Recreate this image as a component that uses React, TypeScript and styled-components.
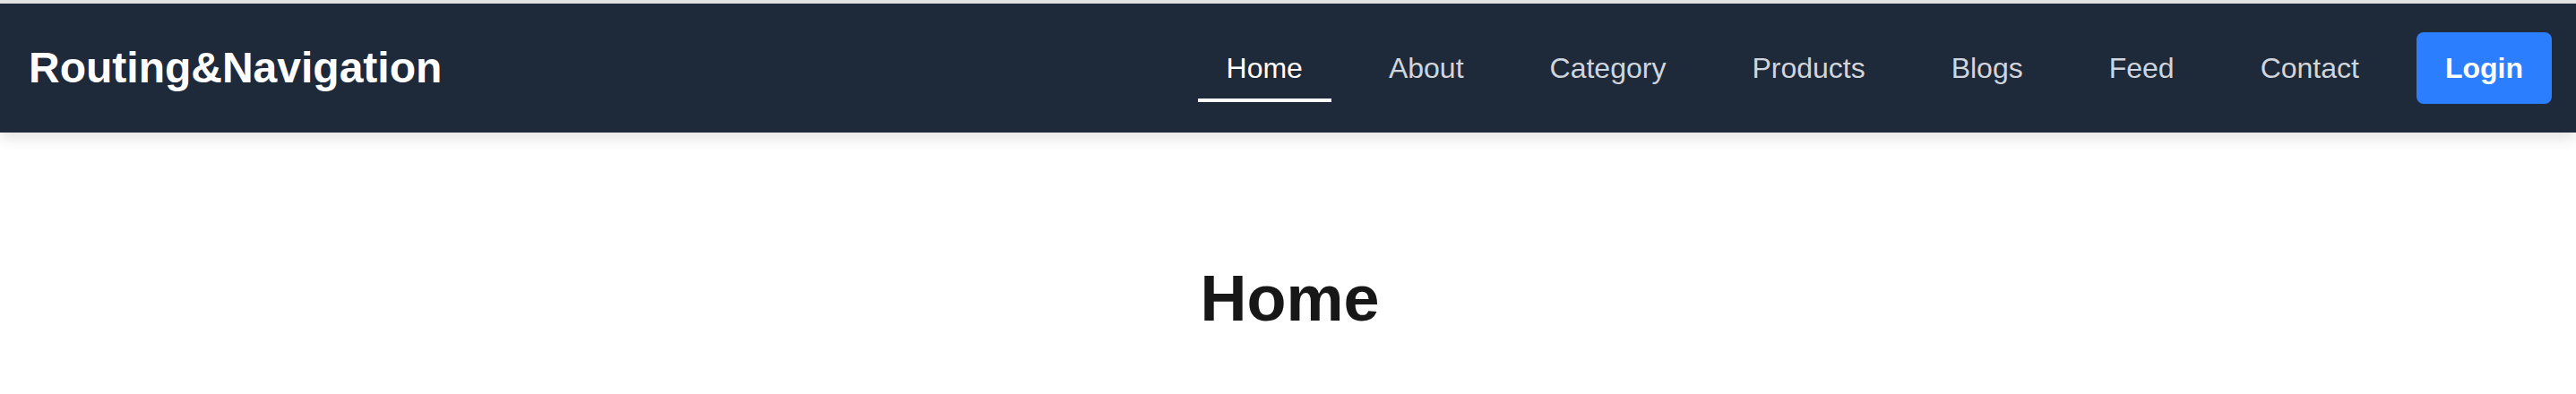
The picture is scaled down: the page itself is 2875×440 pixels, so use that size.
import styled, { createGlobalStyle } from "styled-components";

const GlobalStyle = createGlobalStyle`
  * {
    box-sizing: border-box;
  }
  body {
    margin: 0;
    background: #ffffff;
    font-family: "Liberation Sans", Arial, sans-serif;
  }
`;

const Page = styled.div`
  min-height: 440px;
  border-top: 4px solid #e6e6e6;
`;

const Header = styled.header`
  display: flex;
  align-items: center;
  justify-content: space-between;
  height: 144px;
  padding: 0 27px 0 32px;
  background: #1e2939;
  box-shadow: 0 6px 16px rgba(0, 0, 0, 0.12);
`;

const Logo = styled.div`
  color: #ffffff;
  font-size: 48px;
  font-weight: bold;
  line-height: 72px;
`;

const Nav = styled.nav`
  display: flex;
  align-items: center;
  gap: 32px;
`;

const NavLink = styled.a<{ $active?: boolean }>`
  position: relative;
  padding: 16px 32px;
  font-size: 32px;
  line-height: 48px;
  color: ${({ $active }) => ($active ? "#ffffff" : "#d1d5dc")};
  text-decoration: none;
  cursor: pointer;

  &::after {
    content: "";
    display: ${({ $active }) => ($active ? "block" : "none")};
    position: absolute;
    left: 0;
    right: 0;
    bottom: 2px;
    height: 4px;
    background: #ffffff;
  }
`;

const LoginButton = styled.button`
  padding: 16px 32px;
  border: none;
  border-radius: 8px;
  background: #2b7fff;
  color: #ffffff;
  font-family: inherit;
  font-size: 32px;
  font-weight: bold;
  line-height: 48px;
  cursor: pointer;
`;

const Main = styled.main`
  display: flex;
  justify-content: center;
  padding: 145px 0 0 4px;
`;

const Title = styled.h1`
  margin: 0;
  color: #171717;
  font-size: 72px;
  font-weight: bold;
  line-height: 80px;
`;

const links = ["Home", "About", "Category", "Products", "Blogs", "Feed", "Contact"];

function App() {
  return (
    <Page>
      <GlobalStyle />
      <Header>
        <Logo>Routing&amp;Navigation</Logo>
        <Nav>
          {links.map((link) => (
            <NavLink key={link} $active={link === "Home"}>
              {link}
            </NavLink>
          ))}
          <LoginButton>Login</LoginButton>
        </Nav>
      </Header>
      <Main>
        <Title>Home</Title>
      </Main>
    </Page>
  );
}

export default App;
